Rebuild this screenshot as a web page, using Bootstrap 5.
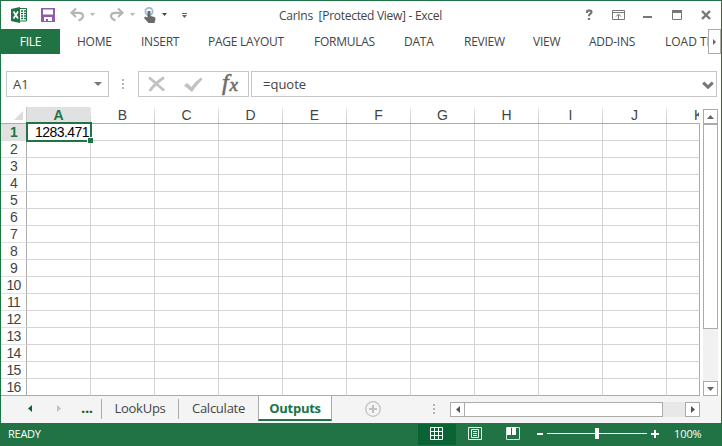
<!DOCTYPE html>
<html lang="en">
<head>
<meta charset="utf-8">
<title>CarIns - Excel</title>
<link href="https://cdn.jsdelivr.net/npm/bootstrap@5.3.0/dist/css/bootstrap.min.css" rel="stylesheet">
<style>
body{width:722px;height:446px;font-family:"Open Sans","Noto Sans",sans-serif;font-size:12px;line-height:16px;color:#444}
svg{display:block;flex:none}
.window{width:722px;height:446px;border:1px solid #217346;background:#fff}
.titlebar{height:28px}
.quick{width:190px;height:28px}
.caption-text{font-size:12px;letter-spacing:-.28px;white-space:pre;margin-left:88px;width:305px;padding-top:2px}
.ribbon{height:25px;width:720px}
.file-tab{width:59px;background:#217346;color:#fff;margin-right:17px;letter-spacing:-.2px}
.rtab{white-space:nowrap;letter-spacing:-.25px}
.w64{width:64px}.w67{width:67px}.w106{width:106px}.w90{width:90px}.w60{width:60px}.w69{width:69px}.w56{width:56px}.w76{width:76px}.wlast{width:43px;letter-spacing:0}
.more-tabs{width:13px;border:1px solid #ababab;background:#fdfdfd}
.formula{margin-top:17px;height:26px;padding-left:5px}
.fbox{border:1px solid #c6c6c6;height:26px;font-size:13px}
.namebox{width:103px;padding:0 6px}
.fxbox{width:111px}
.entry{width:466px;padding-left:11px}
.gripper{width:29px}
.work{margin-top:10px;height:289px}
.sheet{width:699px;font-family:"Liberation Sans",Arial,sans-serif}
.heads{height:17px;border-bottom:1px solid #ababab}
.corner{width:26px;border-right:1px solid #c6c6c6}
.colh{width:64px;flex:none;font-size:14px;line-height:17px;text-align:center;border-right:1px solid;border-image:linear-gradient(#f0f0f0,#c6c6c6) 1}
.colh.on{background:#e1e1e1;color:#217346;font-weight:bold}
.colh.cut{width:32px;border:0;text-align:right;overflow:hidden}
.cut span{display:inline-block;width:5px;text-align:left;overflow:hidden;vertical-align:top}
.line-row{height:17px}
.rowh{width:26px;flex:none;border-right:1px solid #ababab;border-bottom:1px solid #e1e1e1;font-size:14px;letter-spacing:-.7px;line-height:17px;text-align:center}
.rowh.on{background:#e1e1e1;color:#217346;font-weight:bold}
.cell{width:64px;flex:none;border-right:1px solid #d4d4d4;border-bottom:1px solid #d4d4d4;font-size:14px;line-height:17px}
.cell.end{width:33px;border-right-color:#ababab}
.line-row:last-child>div{border-bottom-color:#ababab}
.picked{position:absolute;left:-1px;top:-2px;width:66px;height:20px;border:2px solid #217346;color:#000;text-align:right;line-height:17px;letter-spacing:-.55px;padding-right:1px;z-index:2}
.picked::after{content:"";position:absolute;right:-3px;bottom:-3px;width:6px;height:6px;background:#217346;border:1px solid #fff;border-right:0;border-bottom:0}
.vscroll{width:15px;margin-left:3px;margin-top:2px;height:287px;background:#f1f1f1}
.sbtn{border:1px solid #ababab;background:#fff}
.sbtn.v{height:15px}
.thumb-v{height:205px;border:1px solid #ababab;background:#fff}
.tabs-bar{height:27px;background:#f4f4f4}
.stab{font-size:13px;letter-spacing:-.25px;height:20px;line-height:18px;text-align:center}
.lookups{width:78px;border-left:1px solid #ababab;border-right:1px solid #ababab;margin-top:3px}
.calc{width:79px;margin-top:3px}
.outputs{width:74px;height:26px;margin-top:-1px;background:#fff;border:1px solid #ababab;border-top:0;border-bottom:2px solid #217346;color:#217346;line-height:26px;font-weight:bold}
.dots{width:46px;color:#0a6332;font-size:15px;font-weight:bold;line-height:22px;letter-spacing:-.4px;padding-left:26px}
.hscroll{width:250px;height:15px;margin-top:6px;background:#e8e8e8}
.sbtn.h{width:15px}
.thumb-h{width:199px;border:1px solid #ababab;background:#fff;margin-left:-1px}
.status{height:22px;background:#217346;color:#fff;font-size:11px}
.ready{width:410px;padding-left:7px;letter-spacing:-.25px}
.pct{width:41px;letter-spacing:-.1px}
</style>
<script src="https://cdn.jsdelivr.net/npm/bootstrap@5.3.0/dist/js/bootstrap.bundle.min.js"></script>
</head>
<body class="m-0 overflow-hidden">
<div class="window d-flex flex-column overflow-hidden">
  <header class="titlebar d-flex align-items-center">
    <svg class="quick" viewBox="1 1 190 28">
      <path fill="#217346" d="M11 9l9-2v16l-9-2z"/><path d="M20 8.500h6.500v12.500H20" fill="#fff" stroke="#217346"/>
      <path d="M21 11h5M21 13.500h5M21 16h5M21 18.500h5" stroke="#217346" stroke-width="1.300" stroke-dasharray="2 1"/>
      <path d="M13.500 11.500l4.500 7M18 11.500l-4.500 7" stroke="#fff" stroke-width="1.700"/>
      <path fill="#8f5bae" fill-rule="evenodd" d="M41 8h14v14H41zM43 9.500v5h10v-5zM44 17v4h2v-2h2v2h4v-4z"/>
      <g fill="none" stroke="#b5b5b5" stroke-width="2.200"><path d="M76 8.500l-4.500 4.300 4.500 4.200M72 12.800h6.500c3 0 4.500 1.300 4.500 3.200 0 2.500-2 3.500-4.500 4.500"/><path d="M118 8.500l4.500 4.300-4.500 4.200M122 12.800h-6.500c-3 0-4.500 1.300-4.500 3.200 0 2.500 2 3.500 4.500 4.500"/></g>
      <path fill="#b5b5b5" d="M90 13h5l-2.500 3zM130 13h5l-2.500 3z"/>
      <circle cx="149" cy="11.500" r="3.600" fill="none" stroke="#9db9d6" stroke-width="1.800"/>
      <path fill="#6a6a6a" d="M147.500 11h3v5l4 1q1 .5 1 2l-1 4h-6l-4.500-5 1-1.500 2.500 1z"/>
      <path fill="#444" d="M162 13h5l-2.500 3z"/><path fill="#666" d="M182 13h5v1h-5zM182 15h5l-2.500 3z"/>
    </svg>
    <div class="caption-text">CarIns  [Protected View] - Excel</div>
    <svg width="137" height="28" viewBox="584 1 137 28">
      <path d="M587 13v-1.500q0-.8 1-.8h2.200q1.300 0 1.300 1.300 0 1.200-1.200 1.700-1.300.5-1.300 2.500M589 18v2" fill="none" stroke="#777" stroke-width="2.200"/>
      <path d="M612.500 10.500h12v9h-12zM612 12.500h13M618.500 19v-4M616 16.500l2.500-2.500 2.500 2.500" fill="none" stroke="#777"/>
      <path fill="#777" d="M643 16h9v2h-9z"/><path d="M672.500 11.500h9v8h-9z" fill="none" stroke="#777"/><path fill="#777" d="M672 10h10v3h-10z"/>
      <path d="M702 11l8 8M710 11l-8 8" stroke="#777" stroke-width="2.400"/>
    </svg>
  </header>
  <nav class="ribbon d-flex align-items-stretch">
    <div class="file-tab d-flex align-items-center justify-content-center">FILE</div>
    <div class="d-flex align-items-center overflow-hidden">
      <div class="rtab w64">HOME</div><div class="rtab w67">INSERT</div><div class="rtab w106">PAGE LAYOUT</div><div class="rtab w90">FORMULAS</div><div class="rtab w60">DATA</div><div class="rtab w69">REVIEW</div><div class="rtab w56">VIEW</div><div class="rtab w76">ADD-INS</div><div class="rtab wlast">LOAD TEST</div>
    </div>
    <div class="more-tabs d-flex align-items-center justify-content-center flex-shrink-0 ms-auto"><svg width="3" height="6"><path d="M0 0l3 3-3 3z" fill="#666"/></svg></div>
  </nav>
  <section class="formula d-flex">
    <div class="fbox namebox d-flex align-items-center justify-content-between">A1<svg width="8" height="5"><path d="M0 0h8L4 4z" fill="#777"/></svg></div>
    <svg class="gripper" height="26"><path d="M13 8h2v2h-2zM13 12h2v2h-2zM13 16h2v2h-2z" fill="#b5b5b5"/></svg>
    <div class="fbox fxbox"><svg width="109" height="24" viewBox="139 72 109 24">
      <path d="M149 77.500q5 4 15 13M164 77.500q-8 5-14.500 13.500" fill="none" stroke="#c1c1c1" stroke-width="2.800"/>
      <path d="M184 85.500l3-2.500 4.500 4q4-6 9.500-9.500l1.500 2q-5 4.500-10.500 12.500z" fill="#c1c1c1"/>
      <g font-family="Liberation Serif, serif" font-style="italic" fill="#6d6d6d" stroke="#6d6d6d" stroke-width=".6"><text x="222" y="90" font-size="24">f</text><text x="229.500" y="91" font-size="19">x</text></g>
    </svg></div>
    <div class="fbox entry ms-auto me-1 d-flex align-items-center justify-content-between"><span>=quote</span><svg width="14" height="9" viewBox="0 -2 14 9"><path d="M1.200 .7L6 5.200l4.800-4.500" fill="none" stroke="#777" stroke-width="3"/></svg></div>
  </section>
  <main class="work d-flex">
    <div class="sheet">
      <div class="heads d-flex" id="heads"><div class="corner"><svg width="25" height="16"><path d="M22 4v9h-9z" fill="#dcdcdc"/></svg></div></div>
      <div id="rows"></div>
    </div>
    <div class="vscroll d-flex flex-column">
      <div class="sbtn v d-flex align-items-center justify-content-center"><svg width="7" height="4"><path d="M3.500 0L7 4H0z" fill="#666"/></svg></div>
      <div class="thumb-v"></div>
      <div class="sbtn v mt-auto d-flex align-items-center justify-content-center"><svg width="7" height="4"><path d="M0 0h7L3.500 4z" fill="#666"/></svg></div>
    </div>
  </main>
  <section class="tabs-bar d-flex flex-shrink-0">
    <svg width="54" height="27" viewBox="1 396 54 27"><path d="M32 405v7l-4-3.500z" fill="#0a6332"/></svg>
    <div class="dots flex-shrink-0 position-relative"><svg class="position-absolute start-0 top-0" width="10" height="27" viewBox="55 396 10 27"><path d="M57 405v7l4-3.500z" fill="#c1c1c1"/></svg>...</div>
    <div class="stab lookups flex-shrink-0">LookUps</div>
    <div class="stab calc flex-shrink-0">Calculate</div>
    <div class="stab outputs flex-shrink-0">Outputs</div>
    <svg width="118" height="27" viewBox="332 396 118 27"><circle cx="373" cy="409" r="7.300" fill="none" stroke="#c1c1c1" stroke-width="1.300"/><path d="M369 409h8M373 405v8" stroke="#c1c1c1" stroke-width="2"/><path d="M433 404h2v2h-2zM433 408h2v2h-2zM433 412h2v2h-2z" fill="#b5b5b5"/></svg>
    <div class="hscroll d-flex flex-shrink-0">
      <div class="sbtn h d-flex align-items-center justify-content-center"><svg width="4" height="7"><path d="M4 0v7L0 3.500z" fill="#555"/></svg></div>
      <div class="thumb-h"></div>
      <div class="sbtn h ms-auto d-flex align-items-center justify-content-center"><svg width="4" height="7"><path d="M0 0v7l4-3.500z" fill="#555"/></svg></div>
    </div>
  </section>
  <footer class="status d-flex align-items-center flex-shrink-0">
    <div class="ready">READY</div>
    <svg width="263" height="22" viewBox="411 423 263 22" class="flex-shrink-0">
      <path fill="#0a6332" d="M418 424h38v21h-38z"/>
      <path d="M430.500 427.500h12v12h-12zM434.500 427v13M438.500 427v13M430 431.500h13M430 435.500h13" fill="none" stroke="#fff"/>
      <path d="M468.500 427.500h13v12h-13zM471.500 429.500h7v8h-7zM473 431.500h4M473 433.500h4M473 435.500h4" fill="none" stroke="#e8f1ec"/>
      <path d="M506.500 427.500h13v12h-13z" fill="none" stroke="#d5e5dc"/><path d="M507 427h4v8h-4zM512 427h4v8h-4z" fill="#fff"/>
      <path d="M537 433h6v2h-6zM547 433h100v1H547zM595 428h4v11h-4zM651 433h8v2h-8zM654 430h2v8h-2z" fill="#fff"/>
    </svg>
    <div class="pct">100%</div>
  </footer>
</div>
<script>
const heads=document.getElementById('heads');
'ABCDEFGHIJ'.split('').forEach((c,i)=>heads.insertAdjacentHTML('beforeend',`<div class="colh${i?'':' on'}">${c}</div>`));
heads.insertAdjacentHTML('beforeend','<div class="colh cut"><span>K</span></div>');
const rows=document.getElementById('rows');
for(let r=1;r<=16;r++){
  let h=`<div class="line-row d-flex"><div class="rowh${r===1?' on':''}">${r}</div>`;
  for(let c=0;c<10;c++)h+=`<div class="cell position-relative">${r===1&&c===0?'<div class="picked">1283.471</div>':''}</div>`;
  rows.insertAdjacentHTML('beforeend',h+'<div class="cell end"></div></div>');
}
</script>
</body>
</html>
